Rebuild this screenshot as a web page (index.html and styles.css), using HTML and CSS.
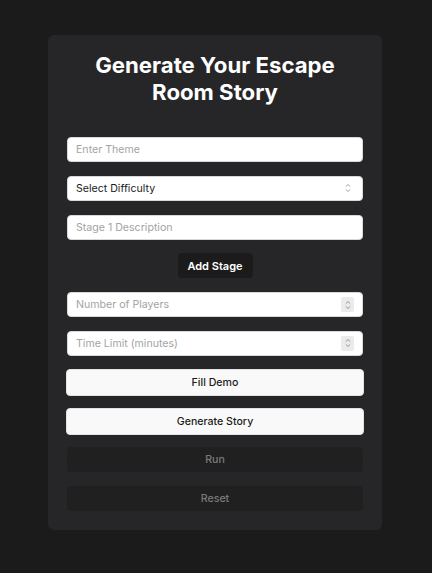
FILE: index.html
```html
<!DOCTYPE html>
<html>
  <head>
    <title>Escape Room Story</title>
    <link rel="stylesheet" href="styles.css">
  </head>
  <body>
    <div class="story-card">
      <h1 class="story-title">Generate Your Escape Room Story</h1>
      <div class="story-form">
        <input class="story-input" type="text" placeholder="Enter Theme" />
        <div class="story-field">
          <select class="story-select">
            <option>Select Difficulty</option>
            <option>Easy</option>
            <option>Medium</option>
            <option>Hard</option>
          </select>
          <svg class="select-arrow" width="8" height="10" viewBox="0 0 8 10">
            <path d="M1.8 3.6 L4 1.5 L6.2 3.6 M1.8 6.4 L4 8.5 L6.2 6.4" fill="none" stroke="#9a9a9a" stroke-width="0.9" />
          </svg>
        </div>
        <input class="story-input" type="text" placeholder="Stage 1 Description" />
        <button class="add-stage-btn">Add Stage</button>
        <div class="story-field">
          <input class="story-input" type="text" placeholder="Number of Players" />
          <span class="spin-box">
            <svg width="8" height="10" viewBox="0 0 8 10">
              <path d="M1.8 3.6 L4 1.5 L6.2 3.6 M1.8 6.4 L4 8.5 L6.2 6.4" fill="none" stroke="#8a8a8a" stroke-width="0.9" />
            </svg>
          </span>
        </div>
        <div class="story-field">
          <input class="story-input" type="text" placeholder="Time Limit (minutes)" />
          <span class="spin-box">
            <svg width="8" height="10" viewBox="0 0 8 10">
              <path d="M1.8 3.6 L4 1.5 L6.2 3.6 M1.8 6.4 L4 8.5 L6.2 6.4" fill="none" stroke="#8a8a8a" stroke-width="0.9" />
            </svg>
          </span>
        </div>
        <button class="story-btn light-btn">Fill Demo</button>
        <button class="story-btn light-btn">Generate Story</button>
        <button class="story-btn dark-btn" disabled>Run</button>
        <button class="story-btn dark-btn" disabled>Reset</button>
      </div>
    </div>
  </body>
</html>
```

FILE: styles.css
```css
body {
  margin: 0;
  padding: 35px 2px 0 0;
  background-color: #1b1b1b;
  font-family: Inter, "Liberation Sans", sans-serif;
}

.story-card {
  width: 334px;
  margin: 0 auto;
  box-sizing: border-box;
  padding: 16px 19px 19px;
  background-color: #262628;
  border-radius: 6px;
}

.story-title {
  margin: 0 0 32px;
  font-size: 22.2px;
  line-height: 27px;
  font-weight: 700;
  color: #ffffff;
  text-align: center;
}

.story-form {
  display: flex;
  flex-direction: column;
  gap: 13.8px;
}

.story-input {
  width: 100%;
  height: 25px;
  box-sizing: border-box;
  padding: 0 8px;
  border: 1px solid #d8d8d8;
  border-radius: 4px;
  background-color: #ffffff;
  font-family: Inter, "Liberation Sans", sans-serif;
  font-size: 10.6px;
  color: #1b1b1b;
  outline: none;
}

.story-input::placeholder {
  color: #a3a3a3;
}

.story-field {
  display: flex;
  align-items: center;
  position: relative;
}

.story-select {
  width: 100%;
  height: 25px;
  box-sizing: border-box;
  padding: 0 8px;
  border: 1px solid #d8d8d8;
  border-radius: 4px;
  background-color: #ffffff;
  font-family: Inter, "Liberation Sans", sans-serif;
  font-size: 10.6px;
  color: #1b1b1b;
  outline: none;
  appearance: none;
}

.select-arrow {
  position: absolute;
  right: 11px;
}

.spin-box {
  position: absolute;
  right: 9px;
  width: 13px;
  height: 15px;
  display: flex;
  align-items: center;
  justify-content: center;
  background-color: #ebebec;
  border-radius: 2px;
}

.add-stage-btn {
  align-self: center;
  width: 75px;
  height: 25px;
  border: none;
  border-radius: 4px;
  background-color: #1b1b1b;
  font-family: Inter, "Liberation Sans", sans-serif;
  font-size: 11px;
  font-weight: 600;
  color: #ffffff;
}

.story-btn {
  border-radius: 4px;
  font-family: Inter, "Liberation Sans", sans-serif;
  font-size: 10.6px;
  font-weight: 500;
}

.light-btn {
  height: 27px;
  margin: -1px -1px;
  border: 1px solid #e2e2e2;
  background-color: #f9f9f9;
  color: #1b1b1b;
}

.dark-btn {
  height: 25px;
  border: none;
  background-color: #202021;
  color: #7b7b7b;
}
```
